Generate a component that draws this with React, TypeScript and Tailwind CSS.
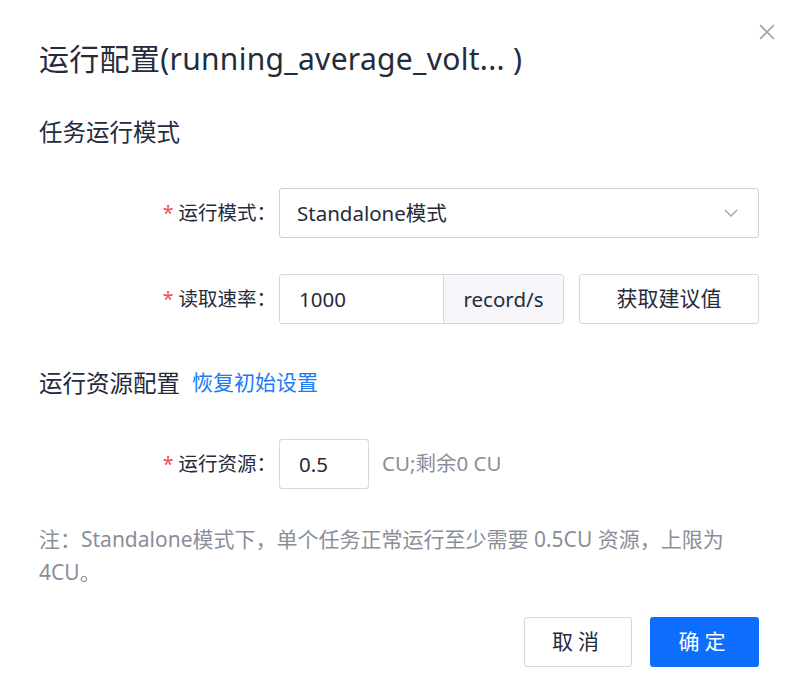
import React, { useState } from 'react';

const FONT = '"Noto Sans", "Noto Sans CJK SC", sans-serif';

const Required: React.FC<{ label: string }> = ({ label }) => (
  <div className="w-[240px] shrink-0 pr-[3px] text-right text-[19.5px] text-[#252b3a]">
    <span className="mr-[5px] text-[#f5494f]">*</span>
    {label}：
  </div>
);

const App: React.FC = () => {
  const [rate, setRate] = useState('1000');
  const [cu, setCu] = useState('0.5');

  return (
    <div className="relative h-[688px] w-[789px] overflow-hidden bg-white pl-[39px] pr-[30px] pt-[39px]" style={{ fontFamily: FONT }}>
      <button className="absolute right-[12px] top-[22px] text-[#9ea0aa]" aria-label="close">
        <svg width="20" height="20" viewBox="0 0 20 20" fill="none" stroke="currentColor" strokeWidth="1.6">
          <path d="M3 3l14 14M17 3L3 17" />
        </svg>
      </button>

      <h1 className="text-[30px] leading-[40px] tracking-[0.3px] text-[#252b3a]">运行配置(running_average_volt... )</h1>

      <h2 className="mt-[38px] text-[23.5px] leading-[30px] text-[#252b3a]">任务运行模式</h2>

      <div className="mt-[41px] flex items-center">
        <Required label="运行模式" />
        <div className="flex h-[50px] flex-1 items-center justify-between rounded-[3px] border border-[#cfd0d8] pl-[17px] pr-[19px]">
          <span className="text-[20.5px] text-[#252b3a]">Standalone模式</span>
          <svg width="16" height="16" viewBox="0 0 16 16" fill="none" stroke="#9ea0aa" strokeWidth="1.3">
            <path d="M2 5l6 6 6-6" />
          </svg>
        </div>
      </div>

      <div className="mt-[36px] flex items-center">
        <Required label="读取速率" />
        <div className="flex h-[50px] w-[285px] rounded-[3px] border border-[#d6d7dd]">
          <input
            value={rate}
            onChange={(e) => setRate(e.target.value)}
            className="w-[163px] bg-transparent pl-[19px] text-[20.5px] text-[#252b3a] outline-none"
          />
          <div className="flex flex-1 items-center justify-center border-l border-[#d6d7dd] bg-[#f5f5fa] text-[20.5px] text-[#252b3a]">
            record/s
          </div>
        </div>
        <button className="ml-[15px] h-[50px] flex-1 rounded-[3px] border border-[#d6d7dd] text-[21px] text-[#252b3a]">
          获取建议值
        </button>
      </div>

      <div className="mt-[43px] flex items-center gap-[12px]">
        <h2 className="text-[23.5px] leading-[30px] text-[#252b3a]">运行资源配置</h2>
        <a className="cursor-pointer text-[21px] text-[#1a7af8]">恢复初始设置</a>
      </div>

      <div className="mt-[40px] flex items-center">
        <Required label="运行资源" />
        <input
          value={cu}
          onChange={(e) => setCu(e.target.value)}
          className="h-[50px] w-[90px] rounded-[3px] border border-[#d6d7dd] pl-[19px] text-[20.5px] text-[#252b3a] outline-none"
        />
        <span className="ml-[13px] text-[20.5px] text-[#8a8e99]">CU;剩余0 CU</span>
      </div>

      <p className="mt-[34px] text-[21px] leading-[33px] text-[#8a8e99]">
        注：Standalone模式下，单个任务正常运行至少需要 0.5CU 资源，上限为4CU。
      </p>

      <div className="mt-[28px] flex justify-end gap-[18px]">
        <button className="h-[50px] w-[108px] rounded-[3px] border border-[#d6d7dd] text-[21px] tracking-[5px] text-[#252b3a]">
          取消
        </button>
        <button className="h-[50px] w-[109px] rounded-[3px] bg-[#0d6efd] text-[21px] tracking-[5px] text-white">
          确定
        </button>
      </div>
    </div>
  );
};

export default App;
